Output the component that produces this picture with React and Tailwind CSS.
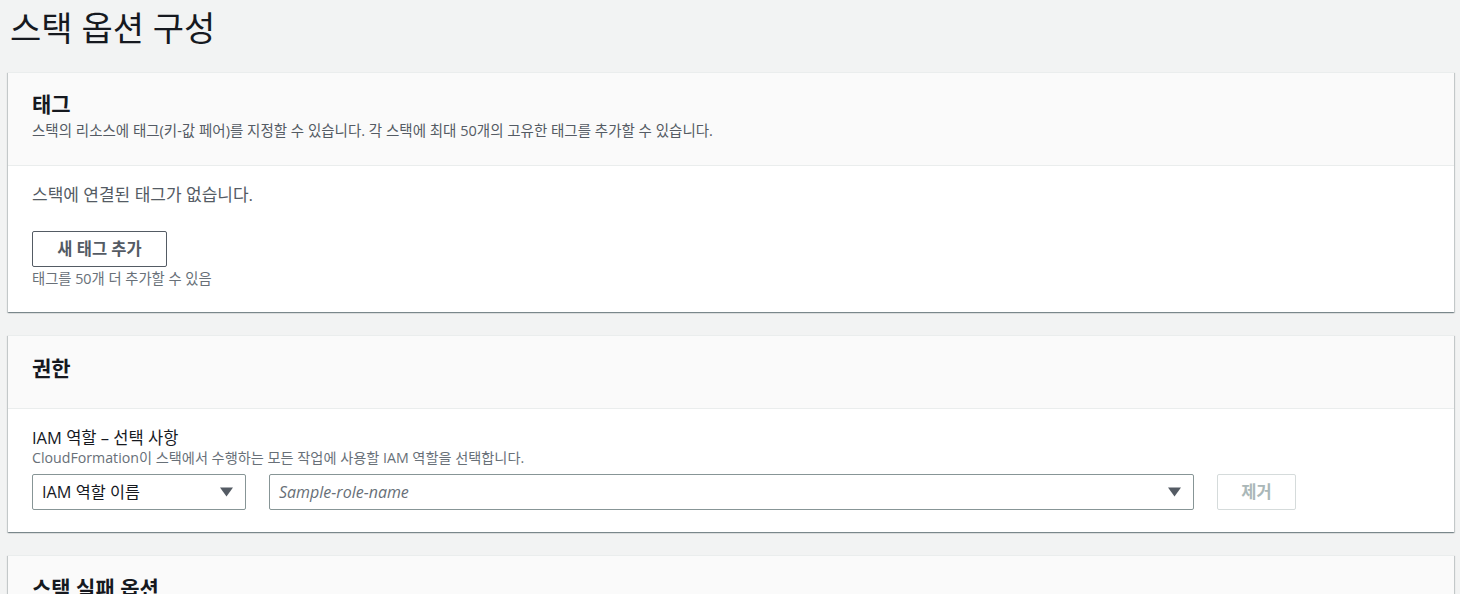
import React from 'react'

const font = { fontFamily: '"Open Sans", "Noto Sans CJK KR", sans-serif' }

const Card = ({ title, desc, children, headerClass }) => (
  <div className="bg-white border-t border-[#eaeded] shadow-[0_1px_1px_0_rgba(0,28,36,0.3),1px_1px_1px_0_rgba(0,28,36,0.15),-1px_1px_1px_0_rgba(0,28,36,0.15)]">
    <div className={`bg-[#fafafa] border-b border-[#eaeded] px-6 ${headerClass}`}>
      <h2 className="text-[21px] leading-[28px] font-bold text-[#16191f]">{title}</h2>
      {desc && <p className="mt-[3px] text-[14.5px] leading-[20px] text-[#545b64]">{desc}</p>}
    </div>
    {children}
  </div>
)

const Caret = () => (
  <svg width="13" height="10" viewBox="0 0 13 10" className="shrink-0">
    <path d="M0 0.5h13L6.5 9.5z" fill="#545b64" />
  </svg>
)

export default function App() {
  return (
    <div style={font} className="h-[594px] overflow-hidden bg-[#f2f3f3] pl-2 pr-[6px]">
      <h1 className="pl-[2px] pt-[8px] text-[34px] leading-[40px] text-[#16191f] font-normal">스택 옵션 구성</h1>

      <div className="mt-[24px] flex flex-col gap-[23px]">
        <Card
          title="태그"
          desc="스택의 리소스에 태그(키-값 페어)를 지정할 수 있습니다. 각 스택에 최대 50개의 고유한 태그를 추가할 수 있습니다."
          headerClass="pt-[17px] pb-[24px]"
        >
          <div className="px-6 pt-[17px] pb-[24px]">
            <p className="text-[17px] leading-[24px] text-[#545b64]">스택에 연결된 태그가 없습니다.</p>
            <button className="mt-[24px] w-[135px] h-[36px] border border-[#545b64] rounded-[2px] bg-white text-[16.5px] font-bold text-[#545b64]">
              새 태그 추가
            </button>
            <p className="mt-[3px] text-[14.3px] leading-[18px] text-[#687078]">태그를 50개 더 추가할 수 있음</p>
          </div>
        </Card>

        <Card title="권한" headerClass="pt-[18px] pb-[26px]">
          <div className="px-6 pt-[18px] pb-[22px]">
            <p className="text-[16.5px] leading-[22px] text-[#16191f]">IAM 역할 – 선택 사항</p>
            <p className="text-[14.2px] leading-[18px] text-[#687078]">CloudFormation이 스택에서 수행하는 모든 작업에 사용할 IAM 역할을 선택합니다.</p>
            <div className="mt-[7px] flex items-center">
              <div className="w-[214px] h-[36px] border border-[#879596] rounded-[2px] flex items-center justify-between pl-[9px] pr-[12px] text-[16.3px] text-[#16191f]">
                <span>IAM 역할 이름</span>
                <Caret />
              </div>
              <div className="ml-[23px] w-[925px] h-[36px] border border-[#879596] rounded-[2px] flex items-center justify-between pl-[9px] pr-[12px] text-[16px]">
                <span className="italic text-[#687078]">Sample-role-name</span>
                <Caret />
              </div>
              <button disabled className="ml-[23px] w-[79px] h-[36px] border border-[#d5dbdb] rounded-[2px] bg-white text-[16.5px] font-bold text-[#aab7b8]">
                제거
              </button>
            </div>
          </div>
        </Card>

        <Card title="스택 실패 옵션" headerClass="pt-[18px] pb-[26px]">
          <div className="h-[120px]" />
        </Card>
      </div>
    </div>
  )
}
